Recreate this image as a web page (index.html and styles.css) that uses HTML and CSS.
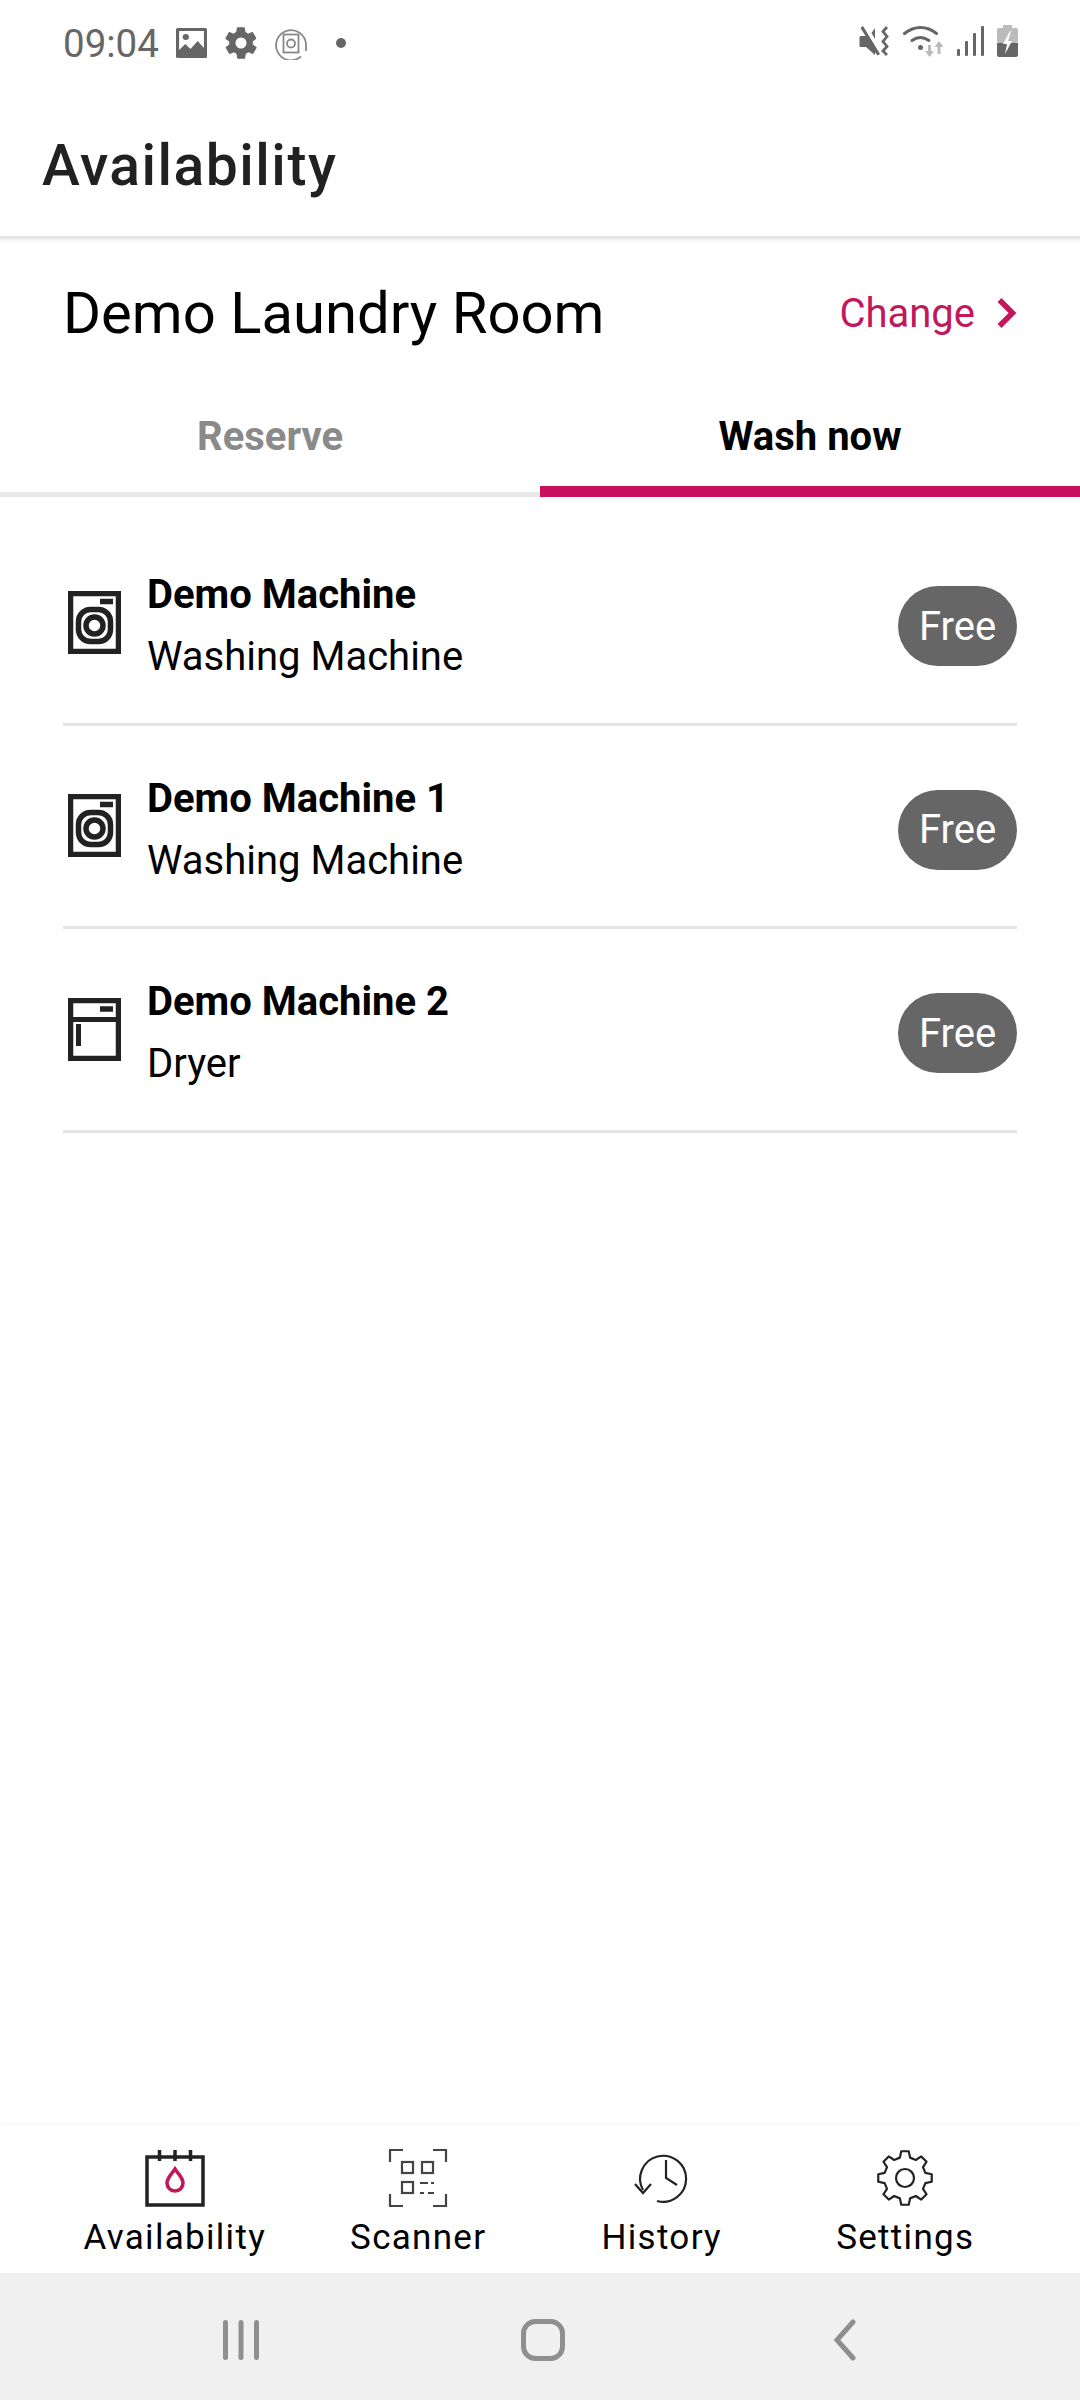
FILE: index.html
```html
<!DOCTYPE html>
<html lang="en">
<head>
    <meta charset="UTF-8" />
    <meta name="viewport" content="width=device-width, initial-scale=1.0"/>
    <title>Availability</title>
    <link rel="stylesheet" href="styles.css">
</head>
<body>
    <div class="status-bar">
        <div class="status-left">
            <span class="clock">09:04</span>
            <svg class="st-image" width="31" height="30" viewBox="0 0 30 30" preserveAspectRatio="none"><rect width="30" height="30" rx="1.500" fill="#666"/><path d="M3 3h24v17l-6-7-7 8-5-5-6 6z" fill="#fff"/><circle cx="9.500" cy="9" r="3" fill="#666"/></svg>
            <svg class="st-gear" width="38" height="38" viewBox="0 0 24 24"><path fill="#666" d="M19.400 13c.1-.3.1-.7.1-1s0-.7-.1-1l2.100-1.600c.2-.2.2-.4.1-.6l-2-3.500c-.1-.2-.4-.3-.6-.2l-2.500 1c-.5-.4-1.100-.7-1.700-1l-.4-2.700c0-.2-.2-.4-.5-.4h-4c-.3 0-.5.2-.5.400l-.4 2.700c-.6.3-1.200.6-1.700 1l-2.500-1c-.2-.1-.5 0-.6.2l-2 3.500c-.1.2-.1.4.1.6L4.600 11c-.1.3-.1.700-.1 1s0 .7.1 1l-2.100 1.600c-.2.2-.2.4-.1.6l2 3.500c.1.2.4.3.6.2l2.500-1c.5.4 1.100.7 1.700 1l.4 2.700c0 .2.2.4.500.4h4c.3 0 .5-.2.5-.4l.4-2.700c.6-.3 1.200-.6 1.700-1l2.500 1c.2.1.5 0 .6-.2l2-3.500c.1-.2.1-.4-.1-.6zM12 15.500a3.500 3.500 0 1 1 0-7 3.500 3.500 0 0 1 0 7z"/></svg>
            <svg class="st-circle" width="32" height="33" viewBox="0 0 32 33" fill="none" stroke="#888"><path d="M26 29.500A15 15 0 1 1 31 17v7" stroke-width="1.800"/><rect x="8.500" y="7.500" width="15" height="18" stroke-width="1.800"/><circle cx="16" cy="16.500" r="4" stroke-width="1.800"/></svg>
            <span class="st-dot"></span>
        </div>
        <div class="status-right">
            <svg width="31" height="32" viewBox="0 0 31 32"><path fill="#666" d="M4 1l17 28-2.500 1.500-2.500-3.500v3L7 22H2c-1 0-1.500-.5-1.500-1.500v-8c0-1 .5-1.500 1.500-1.500h4.500L1.500 3zM16 3v11l-3.500-6z"/><path fill="none" stroke="#666" stroke-width="2.800" d="M28 2l-4 4.500 4 5-4 5 4 5-4 4.500 4 4"/></svg>
            <svg width="41" height="32" viewBox="0 0 41 32"><g fill="none" stroke="#666" stroke-width="3" stroke-linecap="round"><path d="M1.500 8.500c10-8 22-8 32 0"/><path d="M9 15.500c5.500-4 11-4 17 0"/></g><circle cx="17.500" cy="22.500" r="2.500" fill="#666"/><path fill="#bbb" d="M25 20h3v6h3l-4.500 6-4.500-6h3zM36 16l4.500 6h-3v7h-3v-7h-3z"/></svg>
            <svg width="27" height="30" viewBox="0 0 27 30"><g fill="#666"><rect x="0" y="23" width="3" height="7" rx="1"/><rect x="8" y="15" width="3" height="15" rx="1"/><rect x="16" y="7" width="3" height="23" rx="1"/><rect x="24" y="0" width="3" height="30" rx="1"/></g></svg>
            <svg width="21" height="32" viewBox="0 0 21 32"><rect x="6" y="0" width="9" height="4" fill="#bbb"/><rect x="0" y="3" width="21" height="15" rx="2" fill="#bbb"/><path d="M0 18h21v12a2 2 0 0 1-2 2H2a2 2 0 0 1-2-2z" fill="#666"/><path d="M13 6L6 19h4l-2 10 7-13h-4l3-10z" fill="#fff"/></svg>
        </div>
    </div>

    <header class="app-header">
        <h1>Availability</h1>
    </header>

    <main class="content">
        <div class="room-row">
            <span class="room-name">Demo Laundry Room</span>
            <span class="room-change">Change
                <svg width="20" height="32" viewBox="0 0 20 32"><path d="M2.500 3l13 13-13 13" fill="none" stroke="#c2185b" stroke-width="5.500"/></svg>
            </span>
        </div>

        <div class="tabs">
            <div class="tab">Reserve</div>
            <div class="tab active">Wash now</div>
        </div>

        <ul class="machines">
            <li class="machine">
                <svg class="machine-icon" width="53" height="63" viewBox="0 0 53 63" fill="none" stroke="#222"><rect x="2.500" y="2.500" width="48" height="58" stroke-width="5.500"/><path d="M32 10.500h13" stroke-width="5.500"/><rect x="10.500" y="18.500" width="32" height="32" rx="12" stroke-width="5.500"/><circle cx="26.500" cy="34.500" r="8.500" stroke-width="5.500"/></svg>
                <div class="machine-text">
                    <div class="machine-name">Demo Machine</div>
                    <div class="machine-type">Washing Machine</div>
                </div>
                <span class="pill">Free</span>
            </li>
            <li class="machine">
                <svg class="machine-icon" width="53" height="63" viewBox="0 0 53 63" fill="none" stroke="#222"><rect x="2.500" y="2.500" width="48" height="58" stroke-width="5.500"/><path d="M32 10.500h13" stroke-width="5.500"/><rect x="10.500" y="18.500" width="32" height="32" rx="12" stroke-width="5.500"/><circle cx="26.500" cy="34.500" r="8.500" stroke-width="5.500"/></svg>
                <div class="machine-text">
                    <div class="machine-name">Demo Machine 1</div>
                    <div class="machine-type">Washing Machine</div>
                </div>
                <span class="pill">Free</span>
            </li>
            <li class="machine">
                <svg class="machine-icon" width="53" height="63" viewBox="0 0 53 63" fill="none" stroke="#222"><rect x="2.500" y="2.500" width="48" height="58" stroke-width="5.500"/><path d="M0 21.500h53" stroke-width="5"/><path d="M32 11h13" stroke-width="5.500"/><path d="M10.500 26v22" stroke-width="5"/></svg>
                <div class="machine-text">
                    <div class="machine-name">Demo Machine 2</div>
                    <div class="machine-type">Dryer</div>
                </div>
                <span class="pill">Free</span>
            </li>
        </ul>
    </main>

    <nav class="bottom-nav">
        <div class="nav-item">
            <svg width="60" height="58" viewBox="0 0 60 58" fill="none" stroke="#222"><rect x="2" y="8" width="56" height="48" stroke-width="3.500"/><path d="M14.500 1v11M30 1v11M45.500 1v11" stroke-width="3.500"/><path d="M30 20c4 6 8 9 8 14a8 8 0 0 1-16 0c0-5 4-8 8-14z" stroke="#c2185b" stroke-width="3.500"/></svg>
            <span>Availability</span>
        </div>
        <div class="nav-item">
            <svg width="60" height="60" viewBox="0 0 60 60" fill="none" stroke="#444" stroke-width="2.200"><path d="M2 14V2h13M45 2h13v12M2 46v12h13M45 58h13V46"/><rect x="14" y="14" width="11" height="11"/><rect x="34" y="14" width="11" height="11"/><rect x="14" y="34" width="11" height="11"/><path d="M32 35h8M43 35h3M32 45h4M40 45h6"/></svg>
            <span>Scanner</span>
        </div>
        <div class="nav-item">
            <svg width="58" height="60" viewBox="0 0 58 60" fill="none" stroke="#222" stroke-width="2.200"><path d="M10 42A23 23 0 1 1 24 53"/><path d="M2 36l8 9 8-9M33 12v18l11 7"/></svg>
            <span>History</span>
        </div>
        <div class="nav-item">
            <svg width="56" height="58" viewBox="0 0 56 56" fill="none" stroke="#222" stroke-width="2.200" stroke-linejoin="round"><path d="M22.920 7.620L24.240 1.260H31.760L33.080 7.620L38.820 10L44.250 6.440L49.560 11.750L46 17.180L48.380 22.920L54.740 24.240V31.760L48.380 33.080L46 38.820L49.560 44.250L44.250 49.560L38.820 46L33.080 48.380L31.760 54.740H24.240L22.920 48.380L17.180 46L11.750 49.560L6.440 44.250L10 38.820L7.620 33.080L1.260 31.760V24.240L7.620 22.920L10 17.180L6.440 11.750L11.750 6.440L17.180 10z"/><circle cx="28" cy="28" r="9"/></svg>
            <span>Settings</span>
        </div>
    </nav>

    <div class="system-nav">
        <svg width="36" height="40" viewBox="0 0 36 40" fill="#8f8f8f"><rect x="0" y="0" width="5" height="40" rx="2.500"/><rect x="15.500" y="0" width="5" height="40" rx="2.500"/><rect x="31" y="0" width="5" height="40" rx="2.500"/></svg>
        <svg width="44" height="42" viewBox="0 0 44 42" fill="none" stroke="#8f8f8f" stroke-width="5"><rect x="2.500" y="2.500" width="39" height="37" rx="12"/></svg>
        <svg width="24" height="42" viewBox="0 0 24 42" fill="none" stroke="#8f8f8f" stroke-width="5" stroke-linecap="round"><path d="M20 3L4 21l16 18"/></svg>
    </div>
</body>
</html>
```

FILE: styles.css
```css
* {
    box-sizing: border-box;
}

html, body {
    margin: 0;
    padding: 0;
}

body {
    width: 1080px;
    height: 2400px;
    background: #fff;
    font-family: Roboto, sans-serif;
    color: #000;
    display: flex;
    flex-direction: column;
    overflow: hidden;
}

/* status bar */
.status-bar {
    height: 84px;
    padding: 22px 62px 0 63px;
    display: flex;
    justify-content: space-between;
    align-items: flex-start;
}

.status-left {
    display: flex;
    align-items: center;
    height: 42px;
}

.clock {
    font-size: 38.500px;
    color: #666;
    margin-right: 17px;
}

.st-gear {
    margin: 0 15px;
}

.st-dot {
    width: 10px;
    height: 10px;
    border-radius: 50%;
    background: #666;
    margin-left: 29px;
}

.status-right {
    display: flex;
    align-items: center;
    gap: 13px;
    height: 38px;
}

/* app header */
.app-header {
    height: 155px;
    padding: 48px 0 0 42px;
    border-bottom: 3px solid #e6e6e6;
    box-shadow: 0 2px 4px rgba(0, 0, 0, 0.06);
}

.app-header h1 {
    margin: 0;
    font-size: 57px;
    line-height: 68px;
    font-weight: 500;
    letter-spacing: 1.500px;
    color: #212121;
}

/* room row */
.room-row {
    height: 151px;
    padding: 0 63px 3px 63px;
    display: flex;
    justify-content: space-between;
    align-items: center;
}

.room-name {
    font-size: 58px;
}

.room-change {
    font-size: 40px;
    color: #c2185b;
    display: flex;
    align-items: center;
    gap: 22px;
}

/* tabs */
.tabs {
    display: flex;
    height: 107px;
}

.tab {
    flex: 1;
    text-align: center;
    font-size: 40px;
    font-weight: 700;
    color: #8a8a8a;
    border-bottom: 5px solid #e8e8e8;
    padding-top: 23px;
}

.tab.active {
    color: #000;
    border-bottom: 11px solid #c8105f;
}

/* machine list */
.machines {
    list-style: none;
    margin: 0;
    padding: 25px 63px 0;
}

.machine {
    height: 203.500px;
    padding-top: 8px;
    display: flex;
    align-items: center;
    border-bottom: 3px solid #e4e4e4;
}

.machine-icon {
    margin: 0 26px 8px 5px;
}

.machine-text {
    flex: 1;
}

.machine-name {
    font-size: 40px;
    font-weight: 700;
    line-height: 62px;
}

.machine-type {
    font-size: 40px;
    line-height: 62px;
}

.pill {
    width: 119px;
    height: 80px;
    border-radius: 40px;
    background: #666;
    color: #fff;
    font-size: 40px;
    display: flex;
    align-items: center;
    justify-content: center;
}

/* bottom nav */
.content {
    flex: 1;
}

.bottom-nav {
    height: 147px;
    display: grid;
    grid-template-columns: repeat(4, 243.500px);
    padding-left: 53px;
    box-shadow: 0 -3px 3px rgba(0, 0, 0, 0.03);
}

.nav-item {
    display: flex;
    flex-direction: column;
    align-items: center;
    padding-top: 22px;
}

.nav-item svg {
    height: 60px;
}

.nav-item span {
    font-size: 35px;
    letter-spacing: 1.300px;
    line-height: 46px;
    margin-top: 7px;
}

/* android nav */
.system-nav {
    height: 127px;
    background: #f0f0f0;
    display: grid;
    grid-template-columns: repeat(3, 302px);
    justify-items: center;
    align-items: center;
    padding: 6px 0 0 90px;
}
```
